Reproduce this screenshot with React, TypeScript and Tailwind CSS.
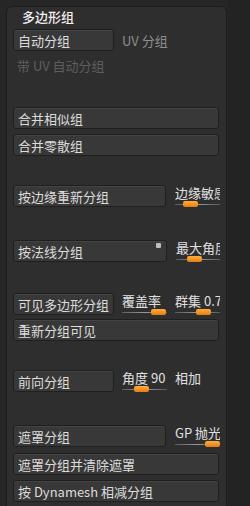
import React from "react";

const font = { fontFamily: '"Noto Sans CJK SC", "Noto Sans", sans-serif' };

function Btn({ w, children, extra }: { w: string; children: React.ReactNode; extra?: React.ReactNode }) {
  return (
    <div
      className={`relative ${w} h-[22px] shrink-0 rounded-[3px] border border-[#1f1f1f] bg-[#383838] shadow-[inset_0_1px_0_#444] flex items-center pl-[4px] text-[13px] leading-none text-[#dcdcdc]`}
    >
      {children}
      {extra}
    </div>
  );
}

function Slider({ label, knob, w, ml }: { label: string; knob: number; w: string; ml: string }) {
  return (
    <div className={`relative ${w} ${ml} h-[24px] shrink-0 overflow-hidden`}>
      <div className="absolute left-0 top-[1px] whitespace-nowrap text-[13px] leading-none text-[#e0e0e0]">{label}</div>
      <div className="absolute left-[-2px] right-[-2px] top-[19px] h-[1px] bg-gradient-to-r from-[#555] via-[#9a9a9a] to-[#555]" />
      <div
        className="absolute top-[16px] h-[6px] w-[15px] rounded-[2px] bg-gradient-to-b from-[#ffad3a] to-[#e67d0c]"
        style={{ left: knob }}
      />
    </div>
  );
}

export default function App() {
  return (
    <div className="w-[250px] h-[506px] overflow-hidden bg-[#262626] relative" style={font}>
      <div className="absolute right-0 top-0 h-full w-[22px] bg-[#232323]" />
      <div className="relative ml-[6px] mt-[6px] w-[221px] h-[520px] rounded-t-[6px] border border-[#1c1c1c] bg-[#2e2e2e] pl-[6px] pr-[7px]">
        <div className="h-[22px] pl-[9px] pt-[2px] text-[13px] leading-[16px] font-medium text-[#f0f0f0]">多边形组</div>
        {/* row 1 */}
        <div className="flex items-center">
          <Btn w="w-[101px]">自动分组</Btn>
          <div className="ml-[8px] text-[13px] leading-none text-[#8c8c8c]">UV 分组</div>
        </div>
        <div className="mt-[8px] pl-[4px] h-[16px] text-[13px] leading-none text-[#5e5e5e]">带 UV 自动分组</div>
        <div className="h-[32px]" />
        <Btn w="w-[206px]">合并相似组</Btn>
        <div className="h-[5px]" />
        <Btn w="w-[206px]">合并零散组</Btn>
        <div className="h-[29px]" />
        {/* 按边缘 */}
        <div className="flex items-start">
          <Btn w="w-[153px]">按边缘重新分组</Btn>
          <Slider label="边缘敏感度" knob={8} w="w-[45px]" ml="ml-[9px]" />
        </div>
        <div className="h-[31px]" />
        <div className="flex items-start">
          <Btn
            w="w-[154px]"
            extra={<div className="absolute right-[5px] top-[2px] h-[5px] w-[5px] rounded-[1px] bg-[#bdbdbd]" />}
          >
            按法线分组
          </Btn>
          <Slider label="最大角度" knob={11} w="w-[44px]" ml="ml-[9px]" />
        </div>
        <div className="h-[29px]" />
        <div className="flex items-start">
          <Btn w="w-[101px]">可见多边形分组</Btn>
          <Slider label="覆盖率" knob={29} w="w-[45px]" ml="ml-[8px]" />
          <Slider label="群集 0.7" knob={21} w="w-[45px]" ml="ml-[8px]" />
        </div>
        <div className="h-[2px]" />
        <Btn w="w-[206px]">重新分组可见</Btn>
        <div className="h-[29px]" />
        <div className="flex items-start">
          <Btn w="w-[101px]">前向分组</Btn>
          <Slider label="角度 90" knob={12} w="w-[45px]" ml="ml-[8px]" />
          <div className="ml-[8px] pt-[1px] text-[13px] leading-none text-[#e0e0e0]">相加</div>
        </div>
        <div className="h-[31px]" />
        <div className="flex items-start">
          <Btn w="w-[153px]">遮罩分组</Btn>
          <Slider label="GP 抛光" knob={30} w="w-[45px]" ml="ml-[9px]" />
        </div>
        <div className="h-[4px]" />
        <Btn w="w-[206px]">遮罩分组并清除遮罩</Btn>
        <div className="h-[5px]" />
        <Btn w="w-[206px]">按 Dynamesh 相减分组</Btn>
      </div>
    </div>
  );
}
